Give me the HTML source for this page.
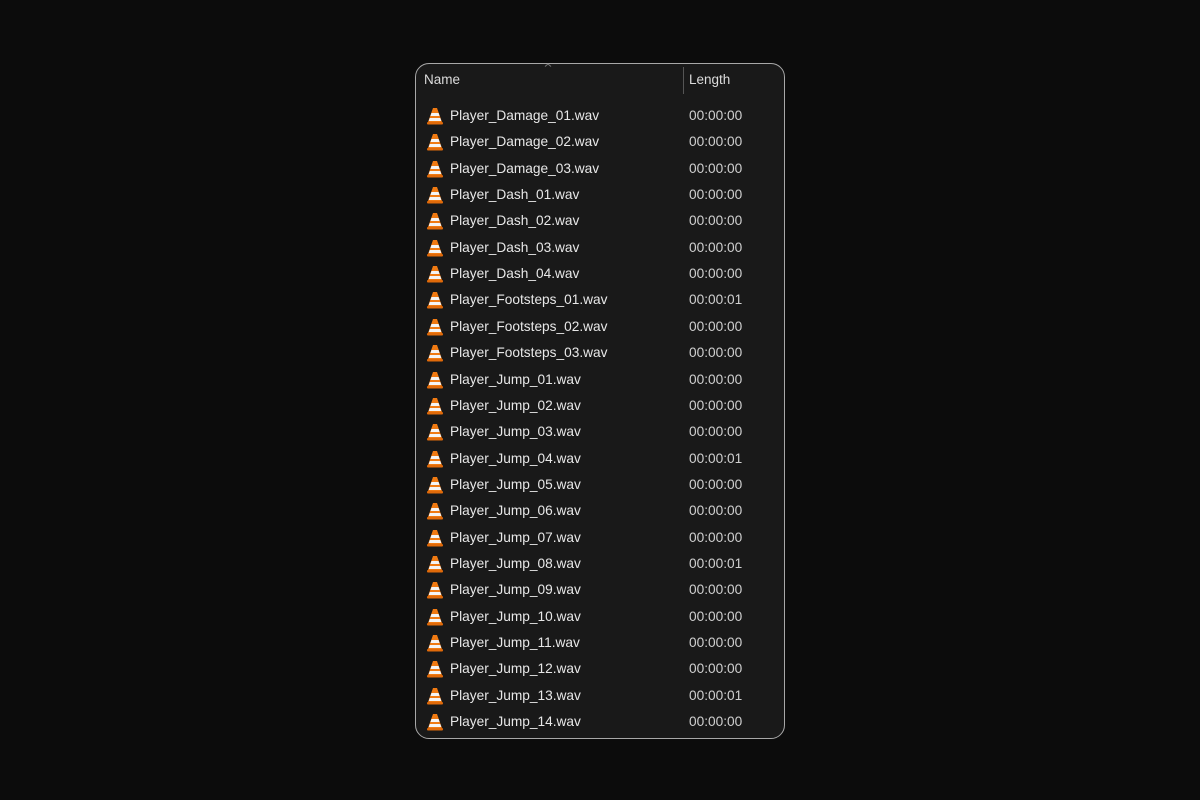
<!DOCTYPE html>
<html><head><style>
html,body{margin:0;width:1200px;height:800px;background:#0c0c0c;overflow:hidden;font-family:"Liberation Sans",sans-serif}
.p{position:absolute;left:415px;top:63px;width:368px;height:674px;border:1px solid #a8a8a8;border-radius:14px;background:#191919}
.h{position:absolute;top:8px;font-size:13.5px;color:#dcdcdc}
.dv{position:absolute;left:267px;top:3px;width:1px;height:27px;background:#555}
.r{position:absolute;left:0;height:26px;width:100%;font-size:13.7px;color:#e8e8e8}
.r svg{position:absolute;left:11px;top:4px}
.n{position:absolute;left:34px;top:5px}
.l{position:absolute;left:273px;top:5px;color:#d0d0d0}
.car{position:absolute;left:128px;top:-1px;width:8px;height:4px}
</style></head><body>
<div class="p">
<svg class="car" viewBox="0 0 8 4"><path d="M1 3.5L4 1l3 2.5" stroke="#777" fill="none" stroke-width="1"/></svg>
<div class="h" style="left:8px">Name</div>
<div class="dv"></div>
<div class="h" style="left:273px">Length</div>
<div id="rows"></div>
</div>
<script>
var names=["Player_Damage_01","Player_Damage_02","Player_Damage_03","Player_Dash_01","Player_Dash_02","Player_Dash_03","Player_Dash_04","Player_Footsteps_01","Player_Footsteps_02","Player_Footsteps_03"];
for(var i=1;i<=14;i++)names.push("Player_Jump_"+(i<10?"0":"")+i);
var ones={7:1,13:1,17:1,22:1};
var h="";
names.forEach(function(n,i){
var t=39+i*26.35;
h+='<div class="r" style="top:'+t+'px"><svg width="16" height="18" viewBox="0 0 16 18"><path d="M6 1h4l5 14H1z" fill="#f07a12"/><path d="M4.4 6h7.2l1 3H3.4z M2.7 11h10.6l1 3H1.7z" fill="#f4f4f4"/><rect x="0" y="15" width="16" height="2.5" rx="1" fill="#e06a0a"/></svg><span class="n">'+n+'.wav</span><span class="l">00:00:0'+(ones[i]?1:0)+'</span></div>';
});
document.getElementById("rows").innerHTML=h;
</script>
</body></html>
